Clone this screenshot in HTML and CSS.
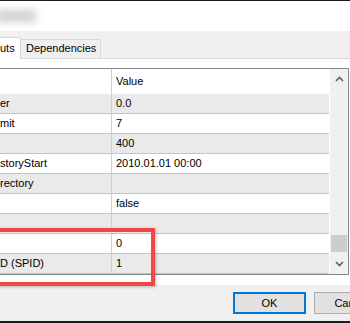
FILE: index.html
```html
<!DOCTYPE html>
<html lang="en">
<head>
    <meta charset="utf-8">
    <title>Properties</title>
    <link rel="stylesheet" href="styles.css">
</head>
<body>
    <div class="vindue">
        <header class="titel">
            <div class="sloret"></div>
        </header>

        <nav class="faner">
            <div class="fane valgt">uts</div>
            <div class="fane">Dependencies</div>
        </nav>

        <section class="side">
            <div class="gitter">
                <div class="raekker">
                    <div class="raekke hoved"><span class="navn"></span><span class="vaerdi">Value</span></div>
                    <div class="raekke graa"><span class="navn">er</span><span class="vaerdi">0.0</span></div>
                    <div class="raekke"><span class="navn">mit</span><span class="vaerdi">7</span></div>
                    <div class="raekke graa"><span class="navn"></span><span class="vaerdi">400</span></div>
                    <div class="raekke"><span class="navn">storyStart</span><span class="vaerdi">2010.01.01 00:00</span></div>
                    <div class="raekke graa"><span class="navn">rectory</span><span class="vaerdi"></span></div>
                    <div class="raekke"><span class="navn"></span><span class="vaerdi">false</span></div>
                    <div class="raekke graa"><span class="navn"></span><span class="vaerdi"></span></div>
                    <div class="raekke"><span class="navn"></span><span class="vaerdi">0</span></div>
                    <div class="raekke graa"><span class="navn">D (SPID)</span><span class="vaerdi">1</span></div>
                </div>
                <div class="rulle">
                    <svg class="pil" width="9" height="6" viewBox="0 0 9 6"><polyline points="1,5 4.5,1.5 8,5" fill="none" stroke="#606060" stroke-width="1.6"/></svg>
                    <div class="spor"><div class="greb"></div></div>
                    <svg class="pil" width="9" height="6" viewBox="0 0 9 6"><polyline points="1,1 4.5,4.5 8,1" fill="none" stroke="#606060" stroke-width="1.6"/></svg>
                </div>
            </div>
            <div class="markering"></div>
        </section>

        <footer class="knapper">
            <button class="knap ok">OK</button>
            <button class="knap">Cancel</button>
        </footer>
    </div>
</body>
</html>
```

FILE: styles.css
```css
body {
    margin: 0;
    background-color: #ffffff;
    font-family: "Liberation Sans", Arial, sans-serif;
    font-size: 11px;
    color: #000000;
}

.vindue {
    width: 350px;
    height: 323px;
    overflow: hidden;
    position: relative;
    border-bottom: 2px solid #1a1a1a;
    box-sizing: border-box;
}

.titel {
    height: 31px;
    border-top: 1px solid #1c1c1c;
    box-sizing: border-box;
    background-color: #ffffff;
    padding: 9px 0 0 0;
}

.sloret {
    width: 40px;
    height: 12px;
    margin-left: -4px;
    background-color: #cfcfcf;
    filter: blur(4px);
}

.faner {
    height: 28px;
    background-color: #f0f0f0;
    border-bottom: 1px solid #d9d9d9;
    box-sizing: border-box;
    display: flex;
    align-items: flex-end;
}

.fane {
    height: 18px;
    line-height: 17px;
    padding: 0 4px 0 5px;
    border: 1px solid #d9d9d9;
    border-bottom: none;
    background-color: #f0f0f0;
    margin-left: -1px;
}

.fane.valgt {
    height: 21px;
    line-height: 21px;
    background-color: #ffffff;
    padding: 0 8px 0 0;
    margin-left: 0;
    border-left: none;
    margin-bottom: -1px;
    width: 12px;
}

.side {
    position: relative;
    padding: 9px 1px 10px 0;
    background-color: #ffffff;
}

.gitter {
    display: flex;
    margin-left: -2px;
    border: 1px solid #828790;
    height: 205px;
    overflow: hidden;
}

.raekker {
    flex: 1;
}

.raekke {
    display: flex;
    height: 20px;
    line-height: 19px;
    border-bottom: 1px solid #c6c6c6;
    box-sizing: border-box;
    background-color: #ffffff;
}

.raekke.hoved {
    height: 25px;
    line-height: 24px;
    border-bottom: none;
}

.raekke.graa {
    background-color: #eaeaea;
}

.navn {
    width: 111px;
    padding-left: 1px;
    border-right: 1px solid #d0d0d0;
    white-space: nowrap;
    overflow: hidden;
}

.vaerdi {
    padding-left: 4px;
}

.rulle {
    width: 18px;
    background-color: #f0f0f0;
    border-left: 1px solid #ffffff;
    display: flex;
    flex-direction: column;
    align-items: center;
}

.pil {
    margin: 7px 0;
}

.spor {
    flex: 1;
    width: 100%;
    display: flex;
    flex-direction: column;
    justify-content: flex-end;
}

.greb {
    height: 17px;
    margin: 0 1px 2px 1px;
    background-color: #cdcdcd;
}

.markering {
    position: absolute;
    left: -10px;
    top: 169px;
    width: 157px;
    height: 50px;
    border: 4px solid #f24747;
    box-shadow: 1px 1px 3px rgba(0, 0, 0, 0.25);
}

.knapper {
    height: 36px;
    background-color: #f0f0f0;
    display: flex;
    gap: 8px;
    padding: 7px 0 0 233px;
    box-sizing: border-box;
}

.knap {
    flex: none;
    width: 75px;
    height: 22px;
    margin: 0;
    padding: 0;
    font-family: "Liberation Sans", Arial, sans-serif;
    font-size: 11px;
    color: #000000;
    background-color: #e1e1e1;
    border: 1px solid #adadad;
}

.knap.ok {
    width: 73px;
    border: 2px solid #0078d7;
}
```
